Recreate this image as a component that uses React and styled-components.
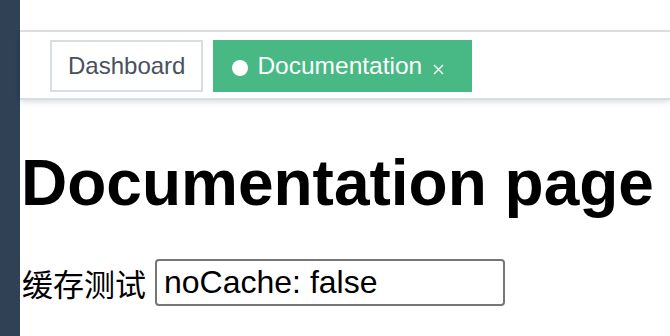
import React from "react";
import styled, { createGlobalStyle } from "styled-components";

const Global = createGlobalStyle`
  html, body { margin: 0; padding: 0; background: #fff; }
  body { font-family: "Liberation Sans", "Noto Sans CJK SC", Arial, sans-serif; }
`;

const Layout = styled.div`
  display: flex;
  width: 670px;
  height: 336px;
  overflow: hidden;
`;

const Sidebar = styled.aside`
  width: 20px;
  flex: none;
  background: #304156;
`;

const Main = styled.div`
  flex: 1;
  display: flex;
  flex-direction: column;
  min-width: 0;
`;

const Navbar = styled.div`
  height: 30px;
  flex: none;
  border-bottom: 2px solid #e5e5e5;
  background: #fff;
`;

const TagsView = styled.div`
  flex: none;
  border-bottom: 2px solid #d8dce5;
  box-shadow: 0 2px 6px 0 rgba(0, 0, 0, 0.12), 0 0 6px 0 rgba(0, 0, 0, 0.04);
  display: flex;
  align-items: flex-start;
  padding: 8px 0 0 30px;
  box-sizing: border-box;
  height: 68px;
  gap: 10px;
  position: relative;
  z-index: 1;
  background: #fff;
`;

const Tag = styled.div`
  height: 52px;
  box-sizing: border-box;
  display: flex;
  align-items: center;
  padding: 0 16px;
  font-size: ${(p) => (p.$active ? "24.5px" : "24px")};
  border: 2px solid ${(p) => (p.$active ? "#48b884" : "#d8dce5")};
  background: ${(p) => (p.$active ? "#48b884" : "#fff")};
  color: ${(p) => (p.$active ? "#fff" : "#495060")};
  white-space: nowrap;
`;

const Dot = styled.span`
  width: 16px;
  height: 16px;
  border-radius: 50%;
  background: #fff;
  margin: 4px 9px 0 1px;
  flex: none;
`;

const Close = styled.span`
  width: 32px;
  height: 32px;
  display: flex;
  align-items: center;
  justify-content: center;
  margin-top: 7px;
`;

const Content = styled.main`
  flex: 1;
`;

const Title = styled.h1`
  font-size: 64px;
  font-weight: 700;
  margin: 47px 0 38px;
  line-height: 1.15;
  color: #000;
  white-space: nowrap;
  padding-left: 1px;
`;

const Row = styled.div`
  display: flex;
  align-items: center;
  gap: 9px;
  font-size: 31px;
  color: #000;
  padding-left: 2px;
`;

const Label = styled.span`
  font-family: "Noto Sans CJK SC", sans-serif;
  line-height: 1;
`;

const Input = styled.input`
  width: 350px;
  height: 47px;
  box-sizing: border-box;
  border: 2px solid #767676;
  border-radius: 4px;
  padding: 0 7px;
  font-family: "Liberation Sans", Arial, sans-serif;
  font-size: 32px;
  color: #000;
  background: #fff;
  outline: none;
`;

export default function App() {
  return (
    <>
      <Global />
      <Layout>
        <Sidebar />
        <Main>
          <Navbar />
          <TagsView>
            <Tag>Dashboard</Tag>
            <Tag $active>
              <Dot />
              Documentation
              <Close>
                <svg width="11" height="11" viewBox="0 0 11 11">
                  <path d="M1 1L10 10M10 1L1 10" stroke="#fff" strokeWidth="1.4" fill="none" />
                </svg>
              </Close>
            </Tag>
          </TagsView>
          <Content>
            <Title>Documentation page</Title>
            <Row>
              <Label>缓存测试</Label>
              <Input defaultValue="noCache: false" />
            </Row>
          </Content>
        </Main>
      </Layout>
    </>
  );
}
